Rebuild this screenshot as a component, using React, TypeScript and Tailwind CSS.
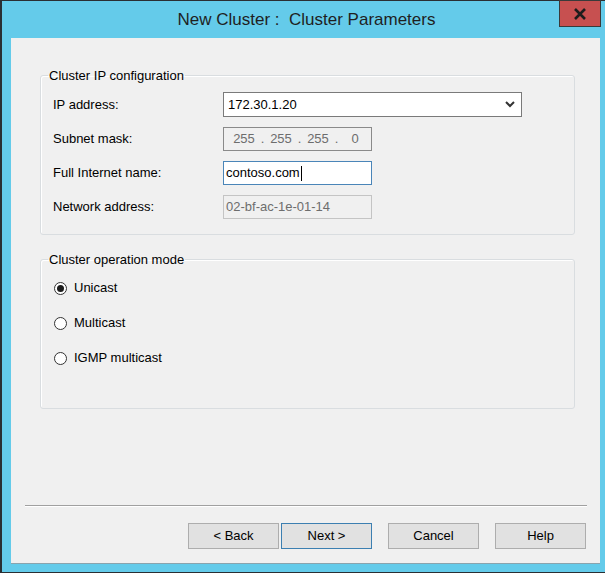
import React from "react";

const font = { fontFamily: '"Liberation Sans", Arial, sans-serif' };

function Field({ label, children }: { label: string; children: React.ReactNode }) {
  return (
    <div className="flex items-center">
      <div className="w-[170px] text-[13px] leading-[16px] text-black">{label}</div>
      {children}
    </div>
  );
}

function Radio({ label, checked }: { label: string; checked?: boolean }) {
  return (
    <div className="flex h-[20px] items-center gap-[7px]">
      <span className="flex h-[13px] w-[13px] items-center justify-center rounded-full border border-[#333333] bg-white">
        {checked && <span className="h-[7px] w-[7px] rounded-full bg-[#1c1c1c]" />}
      </span>
      <span className="text-[13px] leading-[16px] text-black">{label}</span>
    </div>
  );
}

function DialogButton({ label, primary }: { label: string; primary?: boolean }) {
  return (
    <button
      className={`h-[26px] w-[91px] border bg-[#e1e1e1] text-[13px] leading-[16px] text-black ${
        primary ? "border-[#3c7fb1]" : "border-[#adadad]"
      }`}
    >
      {label}
    </button>
  );
}

export default function App() {
  return (
    <div
      style={font}
      className="relative flex h-[573px] w-[605px] flex-col border-t border-b border-l-2 border-[#2a2f33] bg-[#64cbea]"
    >
      {/* Title bar */}
      <div className="flex h-[37px] items-center justify-center pl-[6px]">
        <span className="text-[17px] leading-[20px] text-[#1f1f1f]">New Cluster :&nbsp; Cluster Parameters</span>
      </div>
      <div className="absolute right-[4px] top-[-1px] flex h-[27px] w-[42px] items-center justify-center border border-[#3a3a3a] bg-[#c75050]">
        <svg width="14" height="12" viewBox="0 0 14 12">
          <path d="M2 1 L12 11 M12 1 L2 11" stroke="#1d1d1d" strokeWidth="2.6" />
        </svg>
      </div>

      {/* Content */}
      <div className="ml-[9px] flex h-[525px] w-[589px] flex-col bg-[#f0f0f0] shadow-[0_1px_0_#8aa4ae]">
        <fieldset className="ml-[29px] mt-[30px] h-[167px] w-[535px] rounded-[3px] border border-[#d9dde0] p-0 shadow-[inset_1px_1px_0_#ffffff]">
          <legend className="ml-[7px] px-[1px] text-[13px] leading-[15px] text-black">Cluster IP configuration</legend>
          <div className="flex flex-col gap-[10px] pl-[12px] pt-[9px]">
            <Field label="IP address:">
              <div className="flex h-[25px] w-[299px] items-center justify-between border border-[#7a7a7a] bg-white pl-[4px] pr-[6px]">
                <span className="text-[13px] leading-[16px] text-black">172.30.1.20</span>
                <svg width="10" height="7" viewBox="0 0 10 7">
                  <path d="M1 1 L5 5 L9 1" fill="none" stroke="#333333" strokeWidth="2" />
                </svg>
              </div>
            </Field>
            <Field label="Subnet mask:">
              <div className="flex h-[24px] w-[149px] items-center border border-[#8a8a8a] bg-[#f0f0f0] pl-[5px] text-[13px] leading-[16px] text-[#6d6d6d]">
                <span className="w-[30px] text-center">255</span>
                <span className="w-[7px] text-center">.</span>
                <span className="w-[30px] text-center">255</span>
                <span className="w-[7px] text-center">.</span>
                <span className="w-[30px] text-center">255</span>
                <span className="w-[7px] text-center">.</span>
                <span className="w-[30px] text-center">0</span>
              </div>
            </Field>
            <Field label="Full Internet name:">
              <div className="flex h-[24px] w-[149px] items-center border border-[#4a85b8] bg-white pl-[2px]">
                <span className="text-[13px] leading-[16px] text-black">contoso.com</span>
                <span className="ml-[1px] h-[15px] w-[1px] bg-black" />
              </div>
            </Field>
            <Field label="Network address:">
              <div className="flex h-[24px] w-[149px] items-center border border-[#c4c4c4] bg-[#f0f0f0] pl-[2px]">
                <span className="text-[13px] leading-[16px] text-[#6d6d6d]">02-bf-ac-1e-01-14</span>
              </div>
            </Field>
          </div>
        </fieldset>

        <fieldset className="ml-[29px] mt-[17px] h-[157px] w-[535px] rounded-[3px] border border-[#d9dde0] p-0 shadow-[inset_1px_1px_0_#ffffff]">
          <legend className="ml-[7px] px-[1px] text-[13px] leading-[15px] text-black">Cluster operation mode</legend>
          <div className="flex flex-col gap-[15px] pl-[13px] pt-[11px]">
            <Radio label="Unicast" checked />
            <Radio label="Multicast" />
            <Radio label="IGMP multicast" />
          </div>
        </fieldset>

        <div className="flex-1" />

        <div className="ml-[14px] mr-[13px] border-t border-b border-t-[#a0a0a0] border-b-white" />

        <div className="mb-[14px] mr-[14px] mt-[16px] flex justify-end">
          <div className="flex gap-[2px]">
            <DialogButton label="< Back" />
            <DialogButton label="Next >" primary />
          </div>
          <div className="ml-[16px] flex gap-[16px]">
            <DialogButton label="Cancel" />
            <DialogButton label="Help" />
          </div>
        </div>
      </div>
    </div>
  );
}
